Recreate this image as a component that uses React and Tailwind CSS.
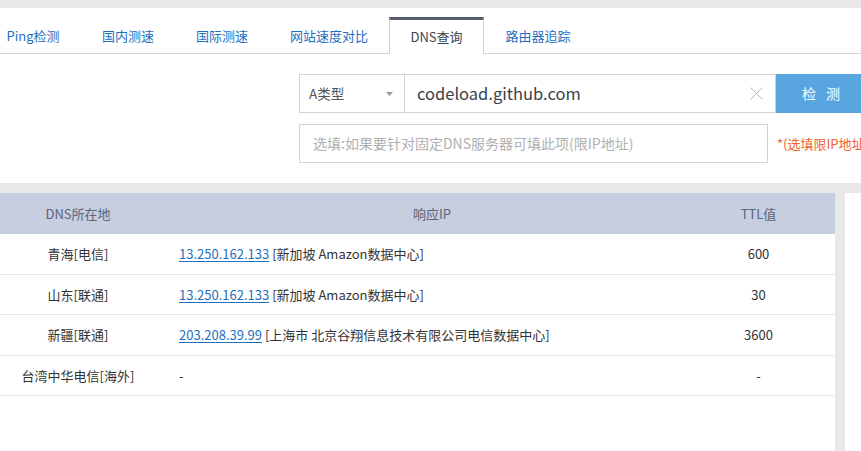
import React from "react";

const tabs = [
  { label: "Ping检测", w: "w-[96px]" },
  { label: "国内测速", w: "w-[94px]" },
  { label: "国际测速", w: "w-[94px]" },
  { label: "网站速度对比", w: "w-[120px]" },
  { label: "DNS查询", w: "w-[95px]", active: true },
  { label: "路由器追踪", w: "w-[108px]" },
];

const rows = [
  { loc: "青海[电信]", ip: "13.250.162.133", info: "[新加坡 Amazon数据中心]", ttl: "600" },
  { loc: "山东[联通]", ip: "13.250.162.133", info: "[新加坡 Amazon数据中心]", ttl: "30" },
  { loc: "新疆[联通]", ip: "203.208.39.99", info: "[上海市 北京谷翔信息技术有限公司电信数据中心]", ttl: "3600" },
  { loc: "台湾中华电信[海外]", ip: null, info: "-", ttl: "-" },
];

export default function App() {
  return (
    <div className="w-[861px] h-[451px] overflow-hidden bg-white font-['Noto_Sans_CJK_SC','Noto_Sans',sans-serif] text-[13px] text-[#333]">
      <div className="h-[8px] bg-[#e8e8e8]" />
      <div className="h-[9px]" />

      {/* tabs */}
      <div className="flex h-[37px] ml-[-15px]">
        {tabs.map((t) =>
          t.active ? (
            <div
              key={t.label}
              className={`${t.w} shrink-0 flex items-center justify-center border-t-[3px] border-t-[#575e70] border-x border-x-[#d0d0d0] text-[#3c4456] text-[13px]`}
            >
              {t.label}
            </div>
          ) : (
            <div
              key={t.label}
              className={`${t.w} shrink-0 flex items-center justify-center border-b border-[#d6d6d6] text-[#1f6fbf] text-[13px] pt-[2px]`}
            >
              {t.label}
            </div>
          )
        )}
        <div className="flex-1 border-b border-[#d6d6d6]" />
      </div>

      {/* form */}
      <div className="ml-[299px] pt-[20px] pb-[20px]">
        <div className="flex h-[39px]">
          <div className="w-[106px] shrink-0 border border-[#d4d4d4] flex items-center justify-between pl-[9px] pr-[11px] text-[#555] text-[13.5px]">
            <span>A类型</span>
            <svg width="7" height="4" viewBox="0 0 7 4">
              <path d="M0 0h7L3.5 4z" fill="#9a9a9a" />
            </svg>
          </div>
          <div className="w-[371px] shrink-0 border-y border-r border-[#d4d4d4] flex items-center justify-between pl-[12px] pr-[12px]">
            <span className="text-[16.5px] text-[#3a3f4a]">codeload.github.com</span>
            <svg width="13" height="13" viewBox="0 0 13 13">
              <path d="M0.5 0.5l12 12M12.5 0.5l-12 12" stroke="#b5b5b5" strokeWidth="1" />
            </svg>
          </div>
          <div className="w-[90px] shrink-0 bg-[#58a5e0] flex items-center justify-center text-white text-[14px] tracking-[10px] pl-[10px]">
            检测
          </div>
        </div>
        <div className="flex items-center mt-[11px] h-[39px]">
          <div className="w-[469px] h-full shrink-0 border border-[#d4d4d4] flex items-center pl-[13px] text-[#b0b0b0] text-[14px]">
            选填:如果要针对固定DNS服务器可填此项(限IP地址)
          </div>
          <span className="ml-[9px] whitespace-nowrap text-[#f0622a] text-[13px]">*(选填限IP地址)</span>
        </div>
      </div>

      <div className="h-[10px] bg-[#e8e8e8]" />

      {/* table */}
      <div className="flex h-[258px]">
        <div className="w-[835px] shrink-0">
          <div className="flex h-[41px] bg-[#c7cedf] text-[#5b6579] items-center">
            <div className="w-[156px] text-center">DNS所在地</div>
            <div className="w-[552px] text-center">响应IP</div>
            <div className="w-[127px] text-center pr-[26px]">TTL值</div>
          </div>
          {rows.map((r, i) => (
            <div key={i} className="flex h-[40.5px] items-center border-b border-[#e6e6e6]">
              <div className="w-[156px] text-center">{r.loc}</div>
              <div className="w-[552px] pl-[23px] whitespace-nowrap">
                {r.ip && (
                  <>
                    <a className="text-[#1f6fbf] underline underline-offset-2">{r.ip}</a>{" "}
                  </>
                )}
                {r.info}
              </div>
              <div className="w-[127px] text-center pr-[26px]">{r.ttl}</div>
            </div>
          ))}
        </div>
        <div className="w-[10px] shrink-0 bg-[#e8e8e8]" />
        <div className="flex-1" />
      </div>
    </div>
  );
}
